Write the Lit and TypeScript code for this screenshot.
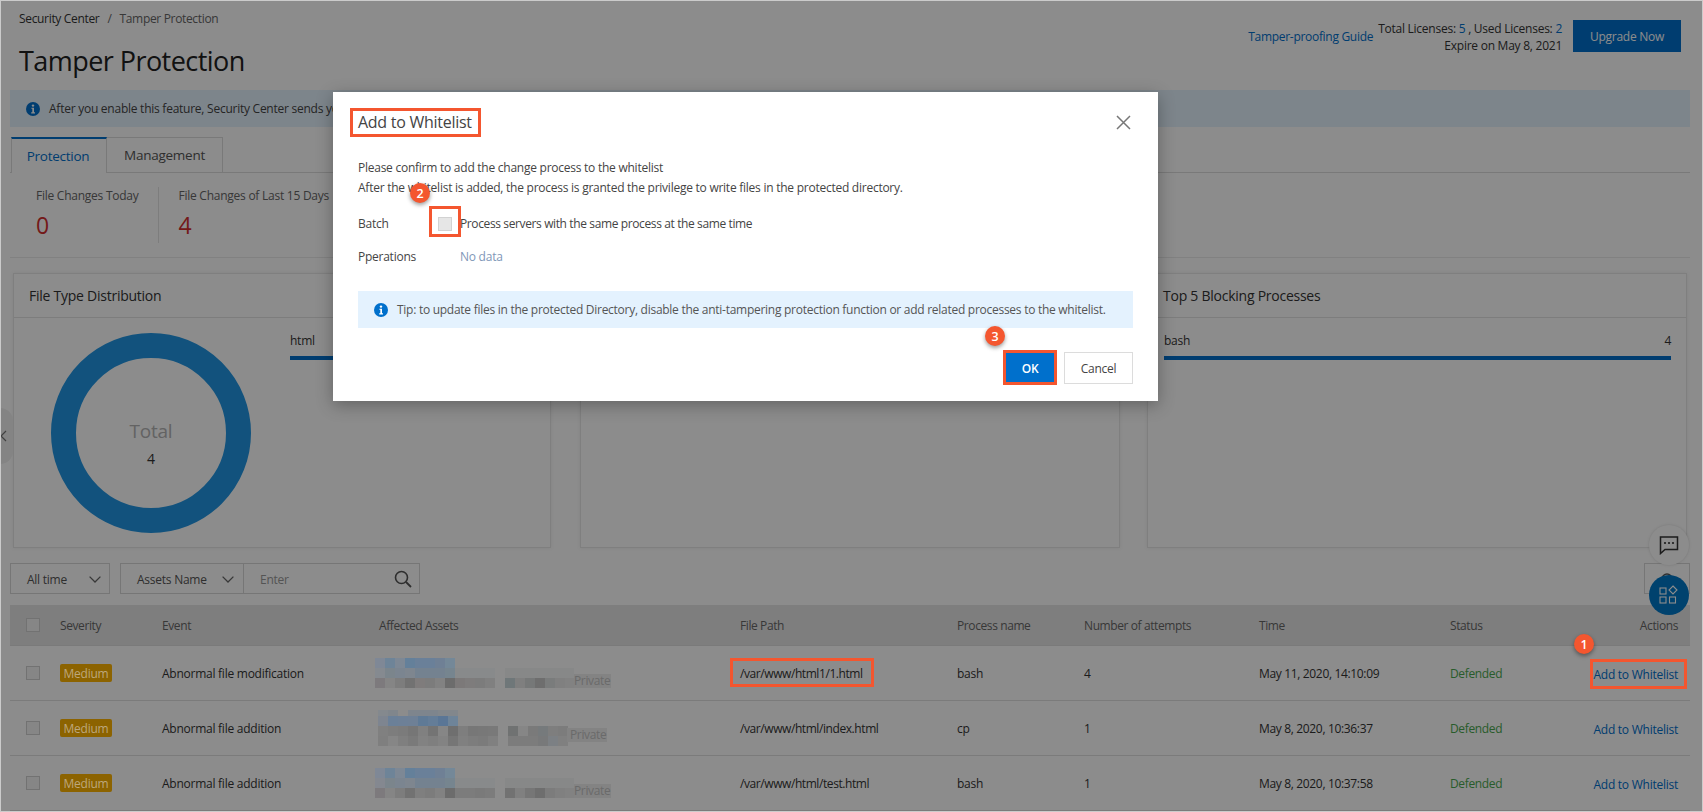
import { LitElement, html, css, svg } from "lit";
import { customElement } from "lit/decorators.js";

type Mos = { x: number; y: number; c: string[] };

const row1: Mos[] = [
  { x: 0, y: 0, c: ["#7f8896", "#6e8498", "#7d8895", "#64809a", "#6a8099", "#6a8099", "#6f8095", "#748898"] },
  { x: 0, y: 10, c: ["#858a90", "#7b858c", "#7b8590", "#7e868f", "#748290", "#748290", "#748290", "#76858f", "#888a8b", "#888a8b", "#888a8b", "#888a8b", "", "#878888", "#878888", "#878888", "#878888", "#878888", "#878888", "#878888"] },
  { x: 0, y: 20, c: ["#7d7a7d", "#858585", "#7d7d7d", "#727272", "#7f7c7c", "#7c7c7c", "#828282", "#6c6c6c", "#7c7979", "#7e7c7c", "#7c7c7c", "#808080", "", "#6f7779", "#7f7f7f", "#767878", "#6e6e6e", "#7a7c7c", "#808080", "#828282"] },
];
const row2: Mos[] = [
  { x: 3, y: 0, c: ["#84898e", "#80868c", "", "#7e858d", "#7e858d", "#7e858d", "#82878c", "#82878c"] },
  { x: 3, y: 6, c: ["#7e8590", "#6b8098", "#6d8097", "#6e8096", "#5f7a96", "#647d98", "#5a7696", "#6e8499"] },
  { x: 3, y: 16, c: ["#808080", "#7d7d7d", "#7b7b7b", "#767676", "#808080", "#747474", "#868686", "#6f6f6f", "#7e7e7e", "#777777", "#787878", "#797979", "", "#707272", "#868686", "#7a7a7a", "#767a7c", "#7e7e7e", "#7c7c7c"] },
  { x: 3, y: 26, c: ["#7f7f7f", "#868686", "#7f7f7f", "#7a7a7a", "#828282", "#7f7f7f", "#838383", "#767676", "#808080", "#7d7d7d", "#7b7b7b", "#808080", "", "#7c7c7c", "#7c7c7c", "#7c7c7c", "#78797a", "#7c8084", "#808080"] },
];
const row3: Mos[] = [
  { x: 0, y: 0, c: ["#7f8896", "#6e8498", "#7d8895", "#64809a", "#6a8099", "#6a8099", "#6f8095", "#748898"] },
  { x: 0, y: 10, c: ["#848890", "#7b858c", "#7b8590", "#7e868f", "#748290", "#748290", "#748290", "#76858f", "#888a8b", "#888a8b", "#888a8b", "#888a8b", "", "#878888", "#878888", "#878888", "#878888", "#878888", "#878888", "#878888"] },
  { x: 0, y: 20, c: ["#7d7a7d", "#858585", "#7d7d7d", "#727272", "#7f7f7f", "#7c7c7c", "#828282", "#6c6c6c", "#7c7c7c", "#7c7c7c", "#7a7a7a", "#7c7c7c", "", "#727272", "#808080", "#767676", "#6e6e6e", "#7c7c7c", "#808080", "#828282"] },
];

const mosaic = (m: Mos[], h: number) => html`<svg class="mosaic" width="199" height=${h} viewBox="0 0 199 ${h}" shape-rendering="crispEdges">
  ${m.map((r) =>
    r.c.map((c, i) =>
      c
        ? svg`<rect x=${r.x + i * 10} y=${r.y} width="10" height=${r.y === 0 && m.length === 4 ? 6 : 10} fill=${c}></rect>`
        : null
    )
  )}
</svg>`;

const rows = [
  { ev: "Abnormal file modification", path: "/var/www/html1/1.html", proc: "bash", n: "4", time: "May 11, 2020, 14:10:09", m: mosaic(row1, 30), lift: false },
  { ev: "Abnormal file addition", path: "/var/www/html/index.html", proc: "cp", n: "1", time: "May 8, 2020, 10:36:37", m: mosaic(row2, 36), lift: true },
  { ev: "Abnormal file addition", path: "/var/www/html/test.html", proc: "bash", n: "1", time: "May 8, 2020, 10:37:58", m: mosaic(row3, 30), lift: false },
];

const boxes = [
  { l: 350, t: 108, w: 131, h: 29 },
  { l: 429, t: 206, w: 32, h: 31 },
  { l: 1003, t: 350, w: 54, h: 35 },
  { l: 730, t: 658, w: 144, h: 29 },
  { l: 1590, t: 659, w: 97, h: 30 },
];
const pins = [
  { n: "1", x: 1584, y: 644 },
  { n: "2", x: 420, y: 193 },
  { n: "3", x: 995, y: 336 },
];

const infoIcon = html`<svg class="info" viewBox="0 0 14 14" width="14" height="14"><circle cx="7" cy="7" r="7" fill="currentColor"></circle><circle cx="7" cy="3.6" r="1.2" fill="#fff"></circle><path d="M5.4 5.7H8v4.6h1v1.1H5.2v-1.1h1.1V6.8H5.4z" fill="#fff"></path></svg>`;
const chevron = html`<svg class="chev" viewBox="0 0 12 7" width="12" height="7"><path d="M.6.6L6 6l5.4-5.4" fill="none" stroke="currentColor" stroke-width="1.3"></path></svg>`;

@customElement("app-root")
export class AppRoot extends LitElement {
  static styles = css`
    :host {
      display: block;
      position: relative;
      width: 1703px;
      height: 812px;
      overflow: hidden;
      background: #fff;
      color: #333;
      font-family: "Open Sans", "Noto Sans", sans-serif;
      font-size: 12px;
      letter-spacing: -0.25px;
    }
    a { color: #0070cc; text-decoration: none; }
    .page {
      box-sizing: border-box;
      width: 1703px;
      height: 812px;
      padding: 0 13px 0 10px;
      display: flex;
      flex-direction: column;
    }
    .top { height: 90px; flex: none; display: flex; justify-content: space-between; }
    .head { padding-left: 9px; }
    .crumb { margin-top: 10px; line-height: 18px; color: #333; display: flex; gap: 8px; letter-spacing: -0.33px; }
    .crumb span + span { color: #666; }
    h1 { margin: 14px 0 0; font-size: 27px; line-height: 38px; font-weight: 400; color: #222; letter-spacing: -0.55px; }
    .meta { display: flex; align-items: flex-start; padding: 20px 9px 0 0; }
    .guide { line-height: 34px; margin-right: 5px; letter-spacing: -0.3px; }
    .lic { line-height: 16.5px; text-align: right; margin: 0 11px 0 0; padding-top: 1px; }
    .upgrade { width: 108px; height: 32px; display: flex; align-items: center; justify-content: center; background: #0070cc; color: #fff; }
    .notice { height: 37px; flex: none; background: #e4f2fe; display: flex; align-items: center; gap: 9px; padding-left: 16px; color: #444; }
    .info { color: #0070cc; flex: none; }
    .tabs { margin-top: 10px; height: 36px; box-sizing: border-box; flex: none; display: flex; border-bottom: 1px solid #dcdcdc; padding-left: 1px; font-size: 13.5px; }
    .tab { box-sizing: border-box; height: 36px; display: flex; align-items: center; justify-content: center; border: 1px solid #dcdcdc; border-left: none; width: 116px; color: #555; }
    .tab.on { width: 96px; padding-right: 2px; color: #0070cc; border-top: 2px solid #0070cc; border-left: 1px solid #dcdcdc; border-bottom: none; background: #fff; }
    .stats { height: 85px; flex: none; box-sizing: border-box; border-bottom: 1px solid #ececec; display: flex; padding: 14px 0 0 26px; }
    .stat { height: 56px; }
    .stat + .stat { border-left: 1px solid #e4e4e4; margin-left: 19px; padding-left: 20px; }
    .stat label { display: block; color: #666; line-height: 18px; }
    .stat b { display: block; font-weight: 400; font-size: 23px; line-height: 30px; margin-top: 5px; color: #d32f2f; }
    .cards { margin: 15px 3px 0; height: 275px; flex: none; display: grid; grid-template-columns: 538px 569px 567px; }
    .card { box-sizing: border-box; border: 1px solid #e8e8e8; box-shadow: 0 0 4px rgba(0,0,0,.08); display: flex; flex-direction: column; }
    .card:nth-child(2) { margin-left: 29px; }
    .card:nth-child(3) { margin-left: 27px; }
    .card h3 { margin: 0; height: 44px; flex: none; box-sizing: border-box; border-bottom: 1px solid #e4e4e4; padding-left: 15px; font-size: 14px; font-weight: 400; line-height: 44px; color: #333; }
    .cbody { flex: 1; display: flex; }
    .donut { position: relative; width: 276px; flex: none; height: 100%; display: flex; align-items: center; padding-left: 37px; box-sizing: border-box; }
    .dtext { position: absolute; left: 37px; top: 0; width: 200px; height: 100%; padding-top: 21px; box-sizing: border-box; display: flex; flex-direction: column; align-items: center; justify-content: center; }
    .dtext span { font-size: 19px; line-height: 26px; color: #b4b4b4; }
    .dtext i { font-style: normal; font-size: 14px; line-height: 20px; margin-top: 5px; }
    .bars { flex: 1; padding: 14px 15px 0 0; }
    .card:last-child .bars { padding-left: 16px; }
    .blab { display: flex; justify-content: space-between; line-height: 18px; }
    .bar { height: 4px; background: #0070cc; margin-top: 6px; }
    .empty { flex: 1; }
    .filters { margin-top: 15px; height: 31px; flex: none; display: flex; }
    .sel { box-sizing: border-box; height: 31px; border: 1px solid #d8d8d8; display: flex; align-items: center; color: #555; padding-top: 1px !important; }
    .sel.time { width: 100px; padding: 0 8px 0 16px; justify-content: space-between; margin-right: 10px; }
    .sel.asset { width: 124px; padding: 0 9px 0 16px; justify-content: space-between; }
    .sel.inp { width: 177px; margin-left: -1px; padding: 0 7px 0 16px; justify-content: space-between; color: #999; }
    .chev { color: #666; }
    .gear { margin-left: auto; width: 46px; height: 31px; box-sizing: border-box; border: 1px solid #d8d8d8; display: flex; align-items: center; justify-content: center; color: #555; }
    .table { margin-top: 11px; flex: none; }
    .tr { display: grid; grid-template-columns: 50px 102px 217px 361px 217px 127px 175px 191px 100px 140px; align-items: center; box-sizing: border-box; border-bottom: 1px solid #e0e0e0; height: 55px; }
    .tr.th { height: 41px; background: #e6e6e6; color: #666; border-bottom: 1px solid #dedede; letter-spacing: -0.4px; }
    .ck { width: 12px; height: 12px; border: 1px solid #d0d0d0; background: #f4f4f4; margin-left: 16px; }
    .end { text-align: right; padding-right: 12px; }
    .tr:not(.th) .end { padding-top: 2px; }
    .path { letter-spacing: -0.42px; }
    .stamp { letter-spacing: -0.34px; }
    .sev { position: relative; z-index: 2; display: inline-flex; align-items: center; justify-content: center; width: 52px; height: 18px; background: #8c6300; color: #bda77c; border-radius: 2px; }
    .ok { color: #4aa84f; letter-spacing: -0.35px; }
    .asset-cell { display: flex; align-items: flex-end; margin-left: -4px; }
    .mosaic { position: relative; z-index: 2; flex: none; display: block; }
    .tag { position: relative; z-index: 2; flex: none; height: 14px; line-height: 14px; background: #838383; color: #6a6a6a; padding: 0 1px 0 0; letter-spacing: -0.35px; }
    .asset-cell.lift .tag { margin-bottom: 4px; margin-left: -7px; padding-left: 3px; }
    .handle { position: absolute; left: 0; top: 408px; width: 13px; height: 56px; background: #f0f0f0; border-radius: 0 28px 28px 0; display: flex; align-items: center; color: #777; }
    .fab { position: absolute; left: 1649px; width: 40px; height: 40px; border-radius: 50%; display: flex; align-items: center; justify-content: center; box-sizing: border-box; }
    .fab.chat { top: 525px; background: #fff; box-shadow: 0 0 3px rgba(0,0,0,.15); color: #333; }
    .fab.blue { top: 575px; background: #0078c8; color: #fff; }
    .scrim { position: absolute; inset: 0; z-index: 1; box-sizing: border-box; background: rgba(0,0,0,.45); background-clip: padding-box; border: 1px solid #cbcbcb; }
    .modal { position: absolute; left: 333px; top: 92px; width: 825px; height: 309px; box-sizing: border-box; z-index: 2; background: #fff; padding: 0 25px; box-shadow: 0 4px 16px rgba(0,0,0,.3); display: flex; flex-direction: column; color: #444; }
    .mhead { height: 60px; flex: none; display: flex; align-items: center; justify-content: space-between; font-size: 16px; color: #444; letter-spacing: -0.27px; }
    .close { color: #777; margin-right: 2px; }
    .para { margin: 6px 0 0; line-height: 20px; }
    .form { margin-top: 17px; display: grid; grid-template-columns: 80px 1fr; row-gap: 15px; line-height: 18px; }
    .batch { display: flex; align-items: center; gap: 8px; letter-spacing: -0.38px; }
    .cbox { width: 12px; height: 12px; background: #e6e6e6; border: 1px solid #d2d2d2; flex: none; }
    .nodata { padding-left: 22px; color: #7f97b8; }
    .tip { margin-top: 25px; height: 37px; flex: none; background: #e4f2fe; display: flex; align-items: center; gap: 9px; padding-left: 16px; color: #555; letter-spacing: -0.27px; }
    .foot { margin-top: 24px; display: flex; justify-content: flex-end; gap: 10px; }
    .btn { height: 32px; box-sizing: border-box; display: flex; align-items: center; justify-content: center; }
    .btn.p { width: 48px; background: #0070cc; color: #fff; font-weight: 600; }
    .btn.c { width: 69px; border: 1px solid #dcdcdc; color: #444; }
    .box { position: absolute; z-index: 3; box-sizing: border-box; border: 3px solid #f4562f; }
    .pin { position: absolute; z-index: 3; width: 20px; height: 20px; margin: -10px 0 0 -10px; border-radius: 50%; background: #f4562f; color: #fff; display: flex; align-items: center; justify-content: center; font-size: 12.5px; font-weight: 600; box-shadow: 0 2px 4px rgba(0,0,0,.4); letter-spacing: 0; }
  `;

  render() {
    return html`
      <div class="page">
        <div class="top">
          <div class="head">
            <div class="crumb"><span>Security Center</span><span>/</span><span>Tamper Protection</span></div>
            <h1>Tamper Protection</h1>
          </div>
          <div class="meta">
            <a class="guide" href="#">Tamper-proofing Guide</a>
            <div class="lic">
              <div>Total Licenses: <a href="#">5</a> , Used Licenses: <a href="#">2</a></div>
              <div>Expire on May 8, 2021</div>
            </div>
            <div class="upgrade">Upgrade Now</div>
          </div>
        </div>
        <div class="notice">${infoIcon}<span>After you enable this feature, Security Center sends you alerts</span></div>
        <div class="tabs"><div class="tab on">Protection</div><div class="tab">Management</div></div>
        <div class="stats">
          <div class="stat"><label>File Changes Today</label><b>0</b></div>
          <div class="stat"><label>File Changes of Last 15 Days</label><b>4</b></div>
        </div>
        <div class="cards">
          <div class="card">
            <h3>File Type Distribution</h3>
            <div class="cbody">
              <div class="donut">
                <svg width="200" height="200" viewBox="0 0 200 200"><circle cx="100" cy="100" r="87.5" fill="none" stroke="#2196e3" stroke-width="25"></circle></svg>
                <div class="dtext"><span>Total</span><i>4</i></div>
              </div>
              <div class="bars"><div class="blab"><span>html</span><span>4</span></div><div class="bar"></div></div>
            </div>
          </div>
          <div class="card"><h3>Top 5 Alert Types</h3><div class="empty"></div></div>
          <div class="card">
            <h3>Top 5 Blocking Processes</h3>
            <div class="bars"><div class="blab"><span>bash</span><span>4</span></div><div class="bar"></div></div>
          </div>
        </div>
        <div class="filters">
          <div class="sel time"><span>All time</span>${chevron}</div>
          <div class="sel asset"><span>Assets Name</span>${chevron}</div>
          <div class="sel inp"><span>Enter</span>
            <svg width="18" height="18" viewBox="0 0 18 18"><circle cx="7.5" cy="7.5" r="6" fill="none" stroke="#555" stroke-width="1.6"></circle><path d="M12 12l5 5" stroke="#555" stroke-width="1.8"></path></svg>
          </div>
          <div class="gear">
            <svg width="16" height="16" viewBox="0 0 16 16"><circle cx="8" cy="8" r="5" fill="none" stroke="currentColor" stroke-width="1.5"></circle></svg>
          </div>
        </div>
        <div class="table">
          <div class="tr th">
            <div><div class="ck"></div></div><div>Severity</div><div>Event</div><div>Affected Assets</div><div>File Path</div><div>Process name</div><div>Number of attempts</div><div>Time</div><div>Status</div><div class="end">Actions</div>
          </div>
          ${rows.map(
            (r) => html`<div class="tr">
              <div><div class="ck"></div></div>
              <div><span class="sev">Medium</span></div>
              <div>${r.ev}</div>
              <div class="asset-cell ${r.lift ? "lift" : ""}">${r.m}<span class="tag">Private</span></div>
              <div class="path">${r.path}</div>
              <div>${r.proc}</div>
              <div>${r.n}</div>
              <div class="stamp">${r.time}</div>
              <div class="ok">Defended</div>
              <div class="end"><a href="#">Add to Whitelist</a></div>
            </div>`
          )}
        </div>
      </div>
      <div class="handle"><svg width="7" height="12" viewBox="0 0 7 12"><path d="M6 1L1 6l5 5" fill="none" stroke="currentColor" stroke-width="1.2"></path></svg></div>
      <div class="fab chat"><svg width="20" height="20" viewBox="0 0 20 20"><path d="M1.5 2h17v12.5H6L1.5 18.5z" fill="none" stroke="currentColor" stroke-width="1.5"></path><circle cx="6" cy="8" r="1.1" fill="currentColor"></circle><circle cx="10" cy="8" r="1.1" fill="currentColor"></circle><circle cx="14" cy="8" r="1.1" fill="currentColor"></circle></svg></div>
      <div class="fab blue"><svg width="20" height="20" viewBox="0 0 20 20" fill="none" stroke="currentColor" stroke-width="1.1"><rect x="1" y="3" width="6" height="6"></rect><rect x="1" y="12" width="6" height="6"></rect><rect x="10.5" y="12" width="6" height="6"></rect><path d="M14 1l4 4-4 4-4-4z"></path></svg></div>
      <div class="scrim"></div>
      <div class="modal">
        <div class="mhead"><span>Add to Whitelist</span>
          <svg class="close" width="15" height="15" viewBox="0 0 15 15"><path d="M1 1l13 13M14 1L1 14" fill="none" stroke="currentColor" stroke-width="1.5"></path></svg>
        </div>
        <p class="para">Please confirm to add the change process to the whitelist<br />After the whitelist is added, the process is granted the privilege to write files in the protected directory.</p>
        <div class="form">
          <div>Batch</div><div class="batch"><span class="cbox"></span><span>Process servers with the same process at the same time</span></div>
          <div>Pperations</div><div class="nodata">No data</div>
        </div>
        <div class="tip">${infoIcon}<span>Tip: to update files in the protected Directory, disable the anti-tampering protection function or add related processes to the whitelist.</span></div>
        <div class="foot"><div class="btn p">OK</div><div class="btn c">Cancel</div></div>
      </div>
      ${boxes.map((b) => html`<div class="box" style="left:${b.l}px;top:${b.t}px;width:${b.w}px;height:${b.h}px"></div>`)}
      ${pins.map((p) => html`<div class="pin" style="left:${p.x}px;top:${p.y}px">${p.n}</div>`)}
    `;
  }
}
